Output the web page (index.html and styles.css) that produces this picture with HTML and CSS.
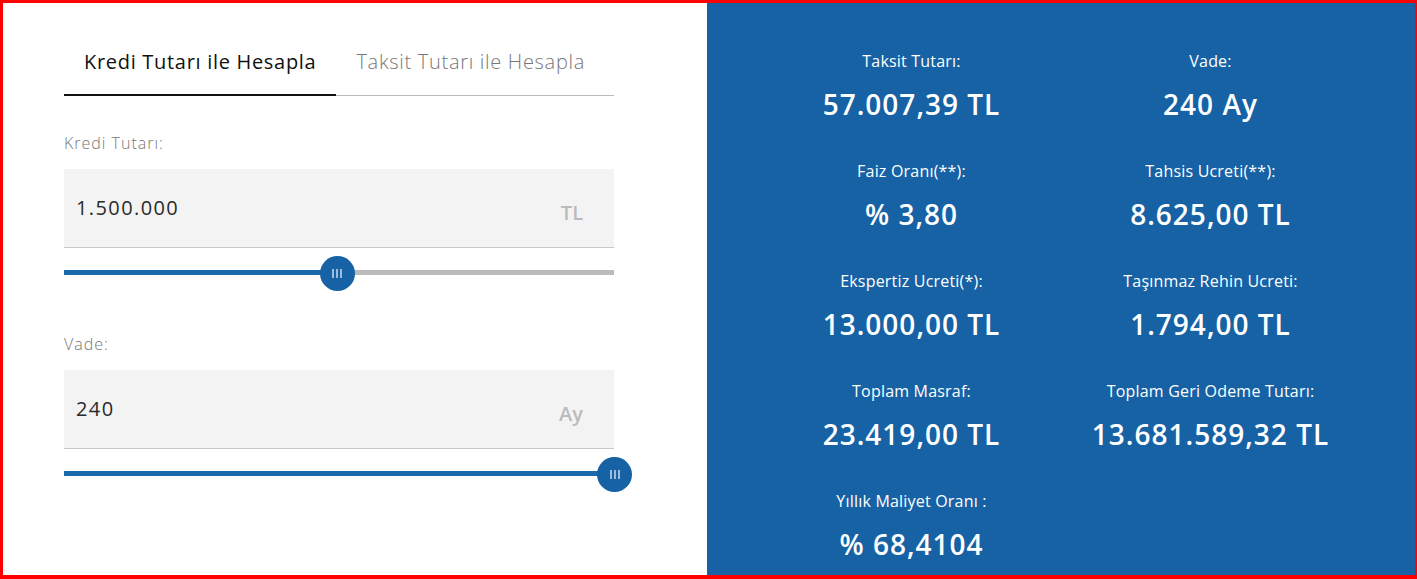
FILE: index.html
```html
<!DOCTYPE html>
<html lang="tr">
<head>
    <meta charset="UTF-8">
    <meta name="viewport" content="width=device-width, initial-scale=1.0">
    <title>Kredi Hesaplama</title>
    <link rel="stylesheet" href="styles.css">
</head>
<body>
    <div class="frame">
        <div class="calc">
            <div class="tabs">
                <div class="tab active">Kredi Tutarı ile Hesapla</div>
                <div class="tab">Taksit Tutarı ile Hesapla</div>
            </div>

            <div class="field">
                <label class="field-label">Kredi Tutarı:</label>
                <div class="input-box">
                    <span class="input-value">1.500.000</span>
                    <span class="input-unit">TL</span>
                </div>
                <div class="slider">
                    <div class="slider-fill" style="width: 49.6%"></div>
                    <div class="slider-thumb" style="left: 49.6%"><i></i><i></i><i></i></div>
                </div>
            </div>

            <div class="field">
                <label class="field-label">Vade:</label>
                <div class="input-box">
                    <span class="input-value">240</span>
                    <span class="input-unit">Ay</span>
                </div>
                <div class="slider">
                    <div class="slider-fill" style="width: 100%"></div>
                    <div class="slider-thumb" style="left: 100%"><i></i><i></i><i></i></div>
                </div>
            </div>
        </div>

        <div class="results">
            <div class="result">
                <div class="result-label">Taksit Tutarı:</div>
                <div class="result-value">57.007,39 TL</div>
            </div>
            <div class="result">
                <div class="result-label">Vade:</div>
                <div class="result-value">240 Ay</div>
            </div>
            <div class="result">
                <div class="result-label">Faiz Oranı(**):</div>
                <div class="result-value">% 3,80</div>
            </div>
            <div class="result">
                <div class="result-label">Tahsis Ucreti(**):</div>
                <div class="result-value">8.625,00 TL</div>
            </div>
            <div class="result">
                <div class="result-label">Ekspertiz Ucreti(*):</div>
                <div class="result-value">13.000,00 TL</div>
            </div>
            <div class="result">
                <div class="result-label">Taşınmaz Rehin Ucreti:</div>
                <div class="result-value">1.794,00 TL</div>
            </div>
            <div class="result">
                <div class="result-label">Toplam Masraf:</div>
                <div class="result-value">23.419,00 TL</div>
            </div>
            <div class="result">
                <div class="result-label">Toplam Geri Odeme Tutarı:</div>
                <div class="result-value">13.681.589,32 TL</div>
            </div>
            <div class="result">
                <div class="result-label">Yıllık Maliyet Oranı :</div>
                <div class="result-value">% 68,4104</div>
            </div>
        </div>
    </div>
</body>
</html>
```

FILE: styles.css
```css
body {
    margin: 0;
    background-color: #fff;
    font-family: "Open Sans", "Liberation Sans", sans-serif;
}
.frame {
    display: flex;
    height: 579px;
    box-sizing: border-box;
    border: 3px solid #ff0000;
    border-bottom-width: 4px;
    border-right-width: 2px;
}
.calc {
    width: 704px;
    box-sizing: border-box;
    padding: 43px 93px 0 61px;
}
.tabs {
    display: flex;
    border-bottom: 1px solid #bbb;
}
.tab {
    padding: 2px 20px 18px 20px;
    font-size: 20px;
    line-height: 28px;
    color: #777;
    font-weight: 300;
    letter-spacing: 0.7px;
}
.tab.active {
    color: #111;
    font-weight: 500;
    border-bottom: 2px solid #111;
    margin-bottom: -1px;
}
.field {
    padding-top: 36px;
}
.field + .field {
    padding-top: 58px;
}
.field-label {
    display: block;
    font-size: 16px;
    line-height: 22px;
    color: #777;
    font-weight: 300;
    letter-spacing: 1px;
    margin-bottom: 15px;
}
.input-box {
    display: flex;
    justify-content: space-between;
    align-items: center;
    height: 78px;
    background-color: #f3f3f3;
    border-bottom: 1px solid #c8c8c8;
    padding: 0 31px 0 12px;
}
.input-value {
    font-size: 20px;
    color: #2a2a2a;
    letter-spacing: 1.4px;
    margin-top: -2px;
}
.input-unit {
    font-size: 20px;
    font-weight: 600;
    color: #bbb;
    margin-top: 8px;
}
.slider {
    position: relative;
    height: 5px;
    margin-top: 22px;
    background-color: #bbb;
}
.slider-fill {
    height: 100%;
    background-color: #1b6aac;
}
.slider-thumb {
    position: absolute;
    top: 50%;
    width: 35px;
    height: 35px;
    margin: -17px 0 0 -17px;
    border-radius: 50%;
    background-color: #1662a5;
    display: flex;
    justify-content: center;
    align-items: center;
    gap: 2px;
}
.slider-thumb i {
    width: 2px;
    height: 9px;
    background-color: #9dbbdc;
}
.results {
    flex: 1;
    background-color: #1662a5;
    display: grid;
    grid-template-columns: 299px 299px;
    grid-auto-rows: 110px;
    padding: 48px 55px 0 55px;
    color: #fff;
    text-align: center;
}
.result-label {
    font-size: 16px;
    line-height: 20px;
    letter-spacing: 0.2px;
}
.result-value {
    font-size: 28px;
    line-height: 34px;
    font-weight: 600;
    letter-spacing: 1px;
    margin-top: 16px;
}
```
